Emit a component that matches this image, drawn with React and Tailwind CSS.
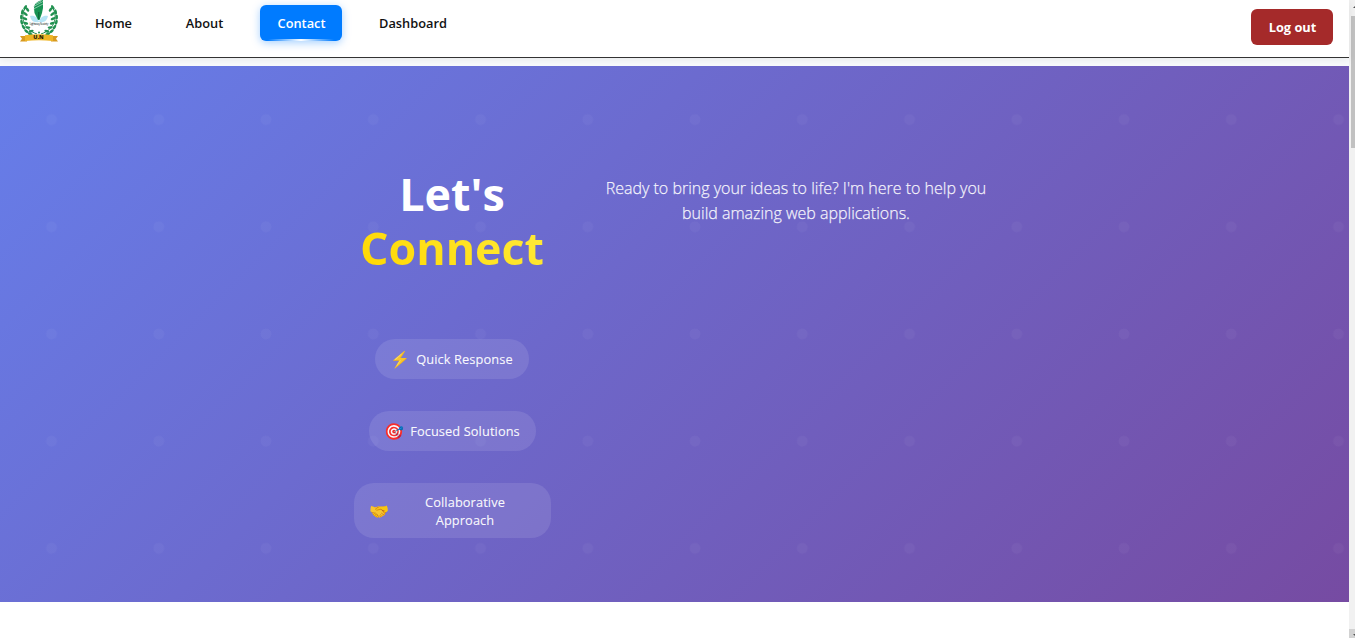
import React from "react";

const navItems = ["Home", "About", "Contact", "Dashboard"];
const widths = {
  Home: "w-[71px] mr-[20px]",
  About: "w-[71px] mr-[20px]",
  Contact: "w-[82px] mr-[20px]",
  Dashboard: "w-[102px]",
};

const leaves = [
  [6, 8.5, 35], [3.6, 13, 15], [2.8, 18, 0], [3.4, 23, -15], [5.4, 27.6, -32], [8.5, 31.5, -50], [12.4, 34, -65],
  [9.4, 10, -35], [7.6, 14.2, -55], [7, 18.6, -65], [7.8, 23, -75], [9.8, 27, -88], [13, 30.4, -105],
];

function Logo() {
  return (
    <svg width="40" height="43" viewBox="0 0 40 43" className="block" role="img" aria-label="U.N">
      {[false, true].map((flip) => (
        <g key={String(flip)} transform={flip ? "translate(40 0) scale(-1 1)" : undefined}>
          <path d="M7 7C1 15 3 29 18 34" fill="none" stroke="#278a4a" strokeWidth="1" />
          {leaves.map(([x, y, r]) => (
            <ellipse key={`${x}-${y}`} cx={x - 0.5} cy={y - 1} rx="1.3" ry="2.6" fill="#219150" transform={`rotate(${r} ${x} ${y})`} />
          ))}
          <path d="M20 22C14 23 12 20 11 16C16 15 19 18 20 22Z" fill="#b5e4f5" />
        </g>
      ))}
      <path d="M15 8C15 4 18 1 24 0V8L23 13L20.5 20H19L15.5 13Z" fill="#159252" />
      <path d="M14.5 6.5L24 1.5M14.5 9L24 4M17 3.5L22 1" stroke="#b4dec8" strokeWidth=".7" />
      <path d="M19.8 12V19" stroke="#0c5d35" strokeWidth="1" />
      <text x="20" y="25.2" textAnchor="middle" textLength="19" fontSize="3.5" fontFamily="Open Sans, sans-serif" fill="#35443c">Lightway Society</text>
      <circle cx="20" cy="32.5" r="1" fill="#219150" />
      <path d="M1 36H8V41.5H1L3 38.7ZM39 36H32V41.5H39L37 38.7Z" fill="#d89a20" />
      <path d="M6 35.2Q20 33.5 34 35.2V41Q20 39.5 6 41Z" fill="#eeb526" />
      <text x="19.5" y="39.2" textAnchor="middle" fontSize="5.5" fontWeight="800" fontFamily="Open Sans, sans-serif" fill="#2b2106">U.N</text>
    </svg>
  );
}

function Header() {
  return (
    <header className="relative z-10 flex h-[58px] items-start border-b border-[#333] bg-white shadow-[0_2px_8px_rgba(0,0,0,0.07)]">
      <div className="ml-[19px] w-10"><Logo /></div>
      <nav className="ml-[19px] mt-[5px] flex">
        {navItems.map((name) => (
          <a
            key={name}
            className={`${widths[name]} relative flex h-9 items-center justify-center overflow-visible rounded-md pt-px text-[12.8px] font-semibold ${
              name === "Contact" ? "bg-[#007bff] pl-px text-white shadow-[0_2px_8px_rgba(0,123,255,0.35)]" : "text-[#111]"
            }`}
          >
            {name}
            {name === "Contact" && (
              <span className="absolute inset-x-2 bottom-0 h-[2px] bg-linear-to-r from-transparent via-white to-transparent" />
            )}
          </a>
        ))}
      </nav>
      <button className="ml-auto mr-4 mt-[9px] h-9 w-[82px] rounded-md bg-[#a52a2a] pl-px pt-px text-[12.8px] font-bold text-white">Log out</button>
    </header>
  );
}

function Pill({ icon, children, className }) {
  return (
    <div className={`flex items-center gap-[7px] rounded-[20px] bg-white/10 pl-[15px] pr-[15px] text-[12.8px] leading-[18px] tracking-[0.1px] text-white/95 [-webkit-text-stroke:0.15px_rgba(255,255,255,0.9)] ${className}`}>
      <span className="w-[18px] text-[16px] leading-none tracking-normal [-webkit-text-stroke:0]">{icon}</span>
      <span className="flex-1 whitespace-nowrap pt-px text-center">{children}</span>
    </div>
  );
}

function Hero() {
  return (
    <section className="relative h-[536px] bg-[linear-gradient(135deg,#667eea_0%,#764ba2_100%)]">
      <div className="absolute inset-0 bg-[radial-gradient(circle,rgba(255,255,255,0.035)_5px,transparent_5.8px)] bg-size-[107.25px_107.2px] bg-position-[-2.1px_0px]" />
      <div className="relative mx-auto flex w-[641px] justify-between pt-[101px]">
        <div className="flex w-[197px] flex-col items-center">
          <h1 className="mr-px flex flex-col items-center text-center text-[44.8px] font-bold leading-[53.76px] text-white">
            <span>Let's</span>
            <span className="bg-[linear-gradient(45deg,#ffd700,#ffeb3b)] bg-clip-text text-transparent">Connect</span>
          </h1>
          <div className="mt-16 flex w-full flex-col items-center gap-8">
            <Pill icon="⚡" className="mr-px h-10 w-[154px]">Quick Response</Pill>
            <Pill icon="🎯" className="h-10 w-[167px]">Focused Solutions</Pill>
            <Pill icon={<span className="block pt-0.5">🤝</span>} className="h-[55px] w-[197px]">Collaborative<br />Approach</Pill>
          </div>
        </div>
        <p className="-mr-px mt-[9px] w-[400px] text-center text-[16px] font-light leading-[25.3px] text-white/90 [-webkit-text-stroke:0.25px_rgba(255,255,255,0.8)]">
          Ready to bring your ideas to life? I'm here to help you build amazing web applications.
        </p>
      </div>
    </section>
  );
}

function Scrollbar() {
  return (
    <div className="flex h-full w-1.5 shrink-0 flex-col overflow-hidden bg-[#f1f1f1]">
      <svg width="6" height="16" className="shrink-0"><path d="M4 8L8 4L12 8Z" fill="#505050" /></svg>
      <div className="ml-0.5 h-[132px] w-1 bg-[#c1c1c1]" />
      <svg width="6" height="9" className="mt-auto shrink-0 bg-[#d2d2d2]"><path d="M4 5H12L8 9Z" fill="#505050" /></svg>
    </div>
  );
}

export default function App() {
  return (
    <div className="flex h-[638px] w-[1355px] overflow-hidden bg-white font-['Open_Sans','Noto_Sans',sans-serif]">
      <main className="flex w-[1349px] flex-col">
        <div className="h-[66px] bg-[#f8fafc]"><Header /></div>
        <Hero />
      </main>
      <Scrollbar />
    </div>
  );
}
